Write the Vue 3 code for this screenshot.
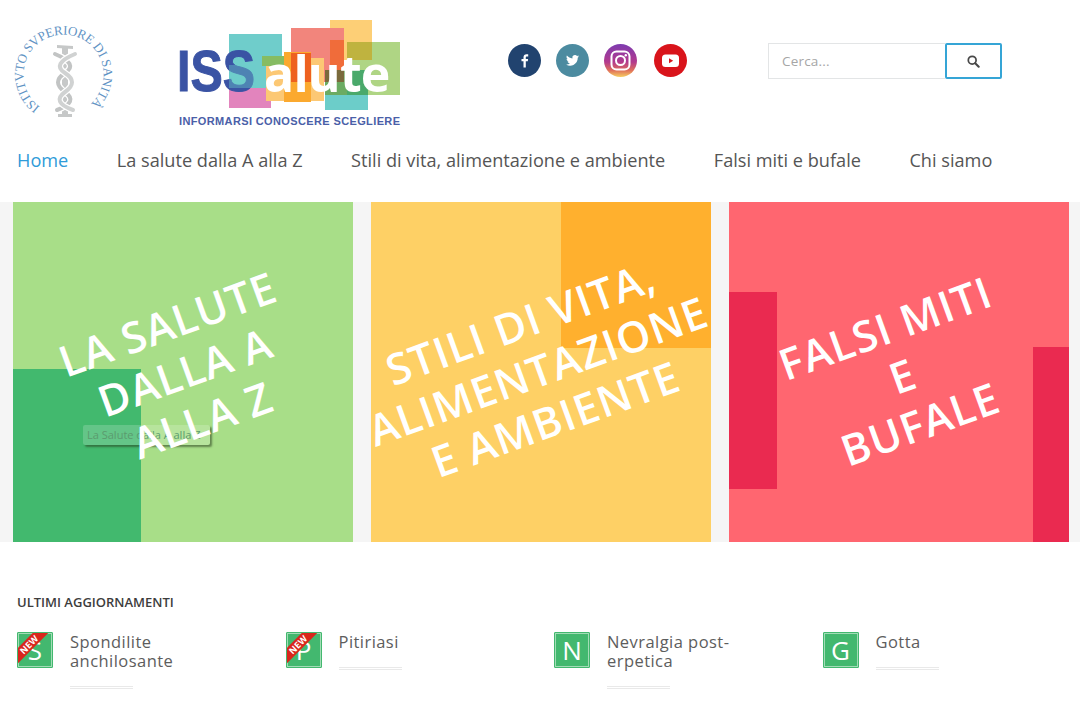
<script setup>
const navItems = [
  { label: 'Home', active: true },
  { label: 'La salute dalla A alla Z' },
  { label: 'Stili di vita, alimentazione e ambiente' },
  { label: 'Falsi miti e bufale' },
  { label: 'Chi siamo' }
]
const updates = [
  { letter: 'S', isNew: true, title: 'Spondilite anchilosante' },
  { letter: 'P', isNew: true, title: 'Pitiriasi' },
  { letter: 'N', isNew: false, title: 'Nevralgia post-erpetica' },
  { letter: 'G', isNew: false, title: 'Gotta' }
]
</script>

<template>
  <div class="page">
    <header class="header">
      <svg class="emblem" width="102" height="102" viewBox="0 0 102 102" aria-label="Istituto Superiore di Sanità">
        <defs>
          <path id="emblem-arc" d="M27 84 A40 40 0 1 1 74 84" fill="none" />
        </defs>
        <text class="emblem-text"><textPath href="#emblem-arc" textLength="196" lengthAdjust="spacing">ISTITVTO SVPERIORE DI SANITÀ</textPath></text>
        <g fill="#c6c8c8">
          <rect x="49" y="23" width="6" height="70" />
          <path d="M44 22 L60 23 L60 26 L44 25 Z" />
          <rect x="45" y="91" width="14" height="3" />
        </g>
        <g fill="none" stroke-linecap="round">
          <path d="M42 31 Q66 41 52 50 Q38 59 52 69 Q66 79 44 87" stroke="#fff" stroke-width="6.500" />
          <path d="M42 31 Q66 41 52 50 Q38 59 52 69 Q66 79 44 87" stroke="#c2c4c4" stroke-width="4" />
          <path d="M62 31 Q38 41 52 50 Q66 59 52 69 Q38 79 60 87" stroke="#fff" stroke-width="6.500" />
          <path d="M62 31 Q38 41 52 50 Q66 59 52 69 Q38 79 60 87" stroke="#d0d2d2" stroke-width="4" />
        </g>
      </svg>

      <svg class="logo" width="226" height="110" viewBox="0 0 226 110" aria-label="ISSalute">
        <rect x="52" y="14" width="53" height="54" fill="#6fcdcb" />
        <rect x="52" y="68" width="42" height="20" fill="#e284bd" />
        <rect x="153" y="0" width="42" height="40" fill="#fdcf76" />
        <rect x="114" y="8" width="53" height="54" fill="#f2857c" />
        <rect x="153" y="20" width="14" height="42" fill="#f06c3a" />
        <rect x="89" y="38" width="58" height="43" fill="#fcc874" />
        <rect x="107" y="32" width="27" height="50" fill="#fba92f" />
        <rect x="114" y="33" width="20" height="29" fill="#ee611f" />
        <rect x="85" y="36" width="22" height="10" fill="#86bc62" />
        <rect x="170" y="22" width="53" height="53" fill="#afd584" />
        <rect x="170" y="22" width="25" height="18" fill="#bfb33f" />
        <rect x="148" y="62" width="43" height="28" fill="#6ccdc9" />
        <rect x="148" y="50" width="43" height="25" fill="#6bab62" />
        <rect x="170" y="50" width="21" height="25" fill="#4aa96b" />
        <rect x="148" y="50" width="19" height="12" fill="#7a6a3c" />
        <text class="logo-iss" x="0" y="71" textLength="78" lengthAdjust="spacingAndGlyphs">ISS</text>
        <rect x="52" y="45" width="27" height="23" fill="#6fcdcb" fill-opacity="0.4" />
        <text class="logo-alute" x="87" y="72">alute</text>
        <text class="logo-tag" x="2" y="104.500" textLength="221">INFORMARSI CONOSCERE SCEGLIERE</text>
      </svg>

      <div class="social">
        <svg width="33" height="33" viewBox="0 0 33 33" aria-label="Facebook">
          <circle cx="16.500" cy="16.500" r="16.500" fill="#21436f" />
          <path d="M17.800 23.500v-6.200h2l.3-2.400h-2.300v-1.400c0-.7.200-1.100 1.200-1.100h1.200V10.300c-.3 0-.9-.1-1.700-.1-1.800 0-3 1.100-3 3v1.700h-2v2.400h2v6.200z" fill="#fff" />
        </svg>
        <svg width="33" height="33" viewBox="0 0 33 33" aria-label="Twitter">
          <circle cx="16.500" cy="16.500" r="16.500" fill="#4c8ba0" />
          <g transform="translate(16.500 16.500) scale(0.78) translate(-16.500 -16.500)">
            <path d="M25 11.200c-.6.300-1.300.500-2 .600.700-.400 1.300-1.100 1.500-1.900-.700.400-1.400.700-2.200.800a3.400 3.400 0 0 0-5.900 3.100c-2.900-.100-5.400-1.500-7.100-3.600-.900 1.600-.500 3.600 1.100 4.600-.600 0-1.100-.200-1.500-.400 0 1.700 1.200 3.100 2.700 3.400-.500.100-1 .200-1.500.100.400 1.400 1.700 2.400 3.200 2.400a6.900 6.900 0 0 1-5 1.400c1.500 1 3.300 1.500 5.200 1.500 6.300 0 9.900-5.300 9.700-10.100.700-.500 1.300-1.100 1.800-1.900z" fill="#fff" />
          </g>
        </svg>
        <svg width="33" height="33" viewBox="0 0 33 33" aria-label="Instagram">
          <defs>
            <linearGradient id="ig" x1="0" y1="0" x2="0" y2="1">
              <stop offset="0" stop-color="#7d3bb0" />
              <stop offset="0.55" stop-color="#b33a8d" />
              <stop offset="0.8" stop-color="#e0705a" />
              <stop offset="1" stop-color="#f6cf62" />
            </linearGradient>
          </defs>
          <circle cx="16.500" cy="16.500" r="16.500" fill="url(#ig)" />
          <rect x="7.500" y="7.500" width="18" height="18" rx="5" fill="none" stroke="#fff" stroke-width="2" />
          <circle cx="16.500" cy="16.500" r="4.500" fill="none" stroke="#fff" stroke-width="2" />
          <circle cx="21.800" cy="11.200" r="1.200" fill="#fff" />
        </svg>
        <svg class="social-youtube" width="33" height="33" viewBox="0 0 33 33" aria-label="YouTube">
          <circle cx="16.500" cy="16.500" r="16.500" fill="#d9141b" />
          <rect x="8" y="10.500" width="17" height="12.500" rx="3.500" fill="#fff" />
          <path d="M15 14.300l4.200 2.500-4.200 2.500z" fill="#d9141b" />
        </svg>
      </div>

      <div class="search">
        <input class="search-input" type="text" placeholder="Cerca..." />
        <button class="search-button" type="button" aria-label="Cerca">
          <svg width="13" height="13" viewBox="0 0 15 15">
            <circle cx="6" cy="6" r="4.500" fill="none" stroke="#484848" stroke-width="2" />
            <path d="M9.500 9.500L13.500 13.500" stroke="#484848" stroke-width="2.400" stroke-linecap="round" />
          </svg>
        </button>
      </div>
    </header>

    <nav class="nav">
      <a v-for="item in navItems" :key="item.label" class="nav-link" :class="{ active: item.active }">{{ item.label }}</a>
    </nav>

    <section class="hero">
      <article class="card card-green">
        <div class="block green-block"></div>
        <div class="tooltip">La Salute dalla A alla Z</div>
        <h2 class="card-title">LA SALUTE<br />DALLA A<br />ALLA Z</h2>
      </article>
      <article class="card card-yellow">
        <div class="block orange-block"></div>
        <h2 class="card-title title-stili">STILI DI VITA,<br />ALIMENTAZIONE<br />E AMBIENTE</h2>
      </article>
      <article class="card card-red">
        <div class="block crimson-left"></div>
        <div class="block crimson-right"></div>
        <h2 class="card-title title-falsi">FALSI MITI<br />E<br />BUFALE</h2>
      </article>
    </section>

    <section class="updates">
      <h3 class="updates-title">ULTIMI AGGIORNAMENTI</h3>
      <div class="updates-grid">
        <div v-for="u in updates" :key="u.letter" class="update">
          <div class="badge">
            <span class="badge-letter">{{ u.letter }}</span>
            <span v-if="u.isNew" class="ribbon">NEW</span>
          </div>
          <div class="update-body">
            <div class="update-title">{{ u.title }}</div>
            <div class="update-rule"></div>
          </div>
        </div>
      </div>
    </section>
  </div>
</template>

<style scoped>
.page {
  width: 1080px;
  height: 717px;
  overflow: hidden;
  background: #fff;
  font-family: "Open Sans", "Liberation Sans", sans-serif;
  color: #555;
}
.header {
  display: flex;
  align-items: flex-start;
  height: 141px;
  padding-top: 20px;
  box-sizing: border-box;
}
.emblem {
  margin: 3px 0 0 13px;
  flex: none;
  overflow: visible;
}
.emblem-text {
  font-family: "Liberation Serif", serif;
  font-size: 13px;
  fill: #5f93c4;
}
.logo {
  margin-left: 62px;
  flex: none;
}
.logo-iss {
  font-family: "Liberation Sans", sans-serif;
  font-weight: 700;
  font-size: 57px;
  fill: #3a53a4;
  stroke: #3a53a4;
  stroke-width: 1px;
}
.logo-alute {
  font-family: "Open Sans", sans-serif;
  font-weight: 700;
  font-size: 50px;
  letter-spacing: -0.8px;
  fill: #fff;
}
.logo-tag {
  font-family: "Liberation Sans", sans-serif;
  font-weight: 700;
  font-size: 11px;
  fill: #4a60a8;
}
.social {
  display: flex;
  gap: 15px;
  margin: 24px 0 0 105px;
}
.social svg {
  display: block;
}
.social .social-youtube {
  margin-left: 2px;
}
.search {
  display: flex;
  width: 234px;
  height: 36px;
  margin: 23px 0 0 81px;
}
.search-input {
  flex: 1;
  min-width: 0;
  box-sizing: border-box;
  height: 100%;
  border: 1px solid #e3e5e6;
  border-right: none;
  padding: 0 13px;
  font: 13.500px "Open Sans", sans-serif;
  letter-spacing: 0.2px;
  outline: none;
  color: #555;
}
.search-input::placeholder {
  color: #a6a6a6;
}
.search-button {
  width: 57px;
  height: 100%;
  box-sizing: border-box;
  border: 2px solid #35a5d6;
  border-radius: 2px;
  background: #fff;
  padding: 0;
  display: flex;
  align-items: center;
  justify-content: center;
}
.nav {
  display: flex;
  gap: 48.500px;
  height: 61px;
  padding: 7px 0 0 17px;
  box-sizing: border-box;
  font-size: 18.150px;
  line-height: 25px;
}
.nav-link {
  color: #555;
  white-space: nowrap;
}
.nav-link.active {
  color: #2f9bd9;
}
.hero {
  display: flex;
  gap: 18px;
  height: 340px;
  padding: 0 11px 0 13px;
  background: #f5f5f5;
}
.card {
  position: relative;
  flex: 0 0 340px;
  min-width: 0;
  height: 340px;
  display: flex;
  align-items: center;
  justify-content: center;
}
.card-green {
  background: #a8de88;
}
.card-yellow {
  background: #fed065;
}
.card-red {
  background: #ff6670;
}
.block {
  position: absolute;
}
.green-block {
  left: 0;
  bottom: 0;
  width: 128px;
  height: 173px;
  background: #42b96e;
}
.orange-block {
  right: 0;
  top: 0;
  width: 150px;
  height: 146px;
  background: #ffb02e;
}
.crimson-left {
  left: 0;
  top: 90px;
  width: 48px;
  height: 197px;
  background: #ea2a50;
}
.crimson-right {
  right: 0;
  bottom: 0;
  width: 36px;
  height: 195px;
  background: #ea2a50;
}
.tooltip {
  position: absolute;
  left: 70px;
  top: 223px;
  width: 127px;
  height: 20px;
  box-sizing: border-box;
  padding-left: 4px;
  font-size: 11px;
  line-height: 20px;
  white-space: nowrap;
  overflow: hidden;
  color: #5b9b6e;
  background: rgba(255, 255, 255, 0.18);
  border-radius: 2px;
  box-shadow: 2px 2px 2px rgba(40, 60, 30, 0.55);
}
.card-title {
  position: relative;
  flex: none;
  margin: 0 0 2px 4px;
  color: #fff;
  font-size: 43px;
  font-weight: 600;
  letter-spacing: 1px;
  line-height: 51px;
  text-align: center;
  white-space: nowrap;
  transform: rotate(-20deg);
}
.title-stili {
  margin: 0 6px 4px 0;
}
.title-falsi {
  margin: 6px 0 0 6px;
}
.updates {
  padding: 52px 0 0 17px;
}
.updates-title {
  margin: 0 0 22px;
  font-size: 13px;
  line-height: 16px;
  font-weight: 600;
  color: #3d3d3d;
}
.updates-grid {
  display: grid;
  grid-template-columns: repeat(4, 268.500px);
}
.update {
  display: flex;
  gap: 17px;
}
.badge {
  position: relative;
  flex: none;
  width: 36px;
  height: 36px;
  box-sizing: border-box;
  background: #43b86f;
  border: 1px solid #43b86f;
  border-radius: 1px;
  box-shadow: inset 0 0 0 1px #a2dcb6;
  overflow: hidden;
  display: flex;
  align-items: center;
  justify-content: center;
}
.badge-letter {
  color: #fff;
  font-size: 26px;
  line-height: 1;
}
.ribbon {
  position: absolute;
  left: -15px;
  top: 6px;
  width: 52px;
  height: 11px;
  background: #d9261c;
  color: #fff;
  font-size: 9px;
  font-weight: 700;
  letter-spacing: 0.3px;
  line-height: 11px;
  text-align: center;
  transform: rotate(-45deg);
}
.update-body {
  width: 172px;
}
.update-title {
  font-size: 16.500px;
  letter-spacing: 0.45px;
  line-height: 19px;
  color: #5d5d5d;
}
.update-rule {
  width: 63px;
  height: 3px;
  margin-top: 16px;
  box-sizing: border-box;
  border-top: 1px solid #e9e9e9;
  border-bottom: 1px solid #e9e9e9;
}
</style>
